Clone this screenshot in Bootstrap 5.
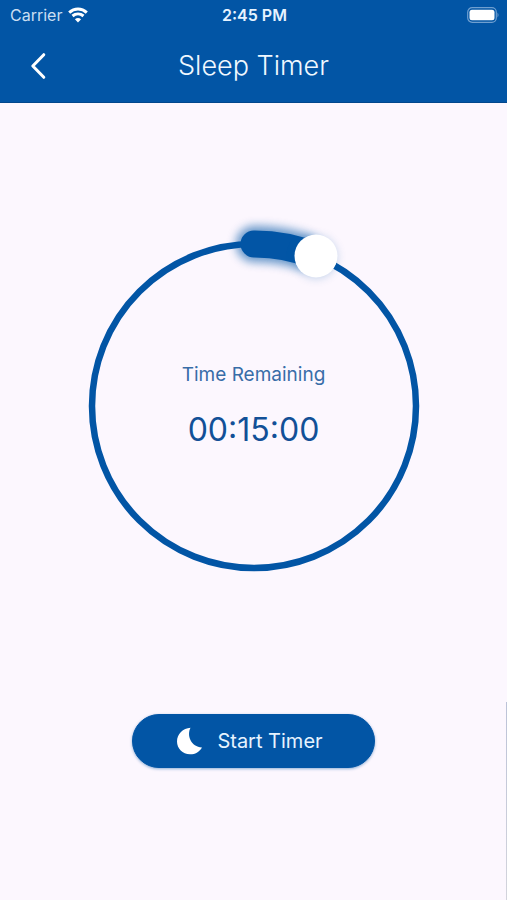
<!DOCTYPE html>
<html lang="en">
<head>
<meta charset="utf-8">
<meta name="viewport" content="width=device-width, initial-scale=1">
<title>Sleep Timer</title>
<link href="https://cdn.jsdelivr.net/npm/bootstrap@5.3.0/dist/css/bootstrap.min.css" rel="stylesheet">
<style>
  :root { --brand: #0255a5; --paper: #fcf7fe; }
  body { font-family: Inter, "Liberation Sans", sans-serif; background: var(--paper); color: var(--brand); }
  .app-header { background: var(--brand); color: #f0f8ff; border-bottom: 1px solid #02478c; }
  .status-bar { height: 30px; padding: 0 8px 0 10px; font-size: 16px; line-height: 30px; }
  .carrier { color: #c9def2; gap: 6px; }
  .clock { color: #e6f3ff; }
  .title-bar { height: 72px; padding: 0 24px; }
  .title-bar h1 { font-size: 27px; line-height: 36px; font-weight: 300; }
  .back-btn { width: 32px; height: 36px; color: inherit; }
  .screen { padding: 113px 16px 16px; gap: 118px;
    background: linear-gradient(#bcc3d8, #d3d4dc) no-repeat right bottom / 1px 198px; }
  .dial { grid-template-columns: 380px; }
  .dial > * { grid-area: 1 / 1; }
  .dial-text { gap: 24px; }
  .dial-label { font-size: 19px; line-height: 24px; color: #386da8; }
  .dial-time { font-size: 32px; line-height: 38px; color: #125097; }
  .start-btn { --bs-btn-color: #e6f3ff; --bs-btn-bg: var(--brand); --bs-btn-border-color: var(--brand);
    --bs-btn-hover-color: #fff; --bs-btn-hover-bg: #024b92; --bs-btn-active-bg: #024b92;
    width: 243px; height: 54px; padding: 0 20px 0 12px; font-size: 20px; gap: 14px; box-shadow: 0 1px 3px #0255a570; }
</style>
</head>
<body>
<div class="d-flex flex-column min-vh-100">
  <header class="app-header">
    <div class="status-bar row g-0 align-items-center">
      <div class="col d-flex align-items-center carrier">
        <span>Carrier</span>
        <svg width="20" height="16" viewBox="0 0 20 16" fill="none" stroke="#fff" stroke-width="3" role="img" aria-label="Wi-Fi">
          <path d="M1.2 5.6C6.3.9 13.7.9 18.8 5.6M4.5 9C7.7 6.2 12.3 6.2 15.5 9"/>
          <path d="M10 15.4 6.900 12.200Q10 9.700 13.100 12.200Z" fill="#fff" stroke="none"/>
        </svg>
      </div>
      <div class="col-auto fw-semibold clock">2:45 PM</div>
      <div class="col d-flex justify-content-end">
        <svg width="32" height="16" viewBox="0 0 32 16" role="img" aria-label="Battery full">
          <rect x=".7" y=".7" width="28.600" height="14.600" rx="4.500" fill="none" stroke="#6f9fd0" stroke-width="1.200"/>
          <rect x="2.500" y="2.800" width="25" height="10.400" rx="2.500" fill="#fff"/>
          <path d="M30.500 5.500Q32.500 8 30.500 10.500Z" fill="#6f9fd0"/>
        </svg>
      </div>
    </div>
    <nav class="title-bar row g-0 align-items-center">
      <div class="col">
        <button type="button" class="back-btn btn p-0 border-0 d-flex align-items-center justify-content-center" aria-label="Back">
          <svg width="20" height="30" viewBox="0 0 20 30" fill="none" stroke="#fff" stroke-width="3" stroke-linecap="round" stroke-linejoin="round"><path d="M13.800 3.700 2.800 15 13.800 26.300"/></svg>
        </button>
      </div>
      <h1 class="col-auto mb-0">Sleep Timer</h1>
      <div class="col"></div>
    </nav>
  </header>

  <main class="screen flex-grow-1 d-flex flex-column align-items-center">
    <div class="dial d-grid">
      <svg class="w-100" viewBox="0 0 380 380" aria-hidden="true">
        <defs>
          <filter id="glow" filterUnits="userSpaceOnUse" x="130" y="-30" width="190" height="140"><feGaussianBlur stdDeviation="5"/></filter>
        </defs>
        <circle cx="190" cy="190" r="162" fill="none" stroke="#0255a5" stroke-width="6.500"/>
        <path d="M190 28A162 162 0 0 1 238 35" fill="none" stroke="#0255a5" stroke-width="36" stroke-linecap="round" opacity=".6" filter="url(#glow)"/>
        <path d="M190 28A162 162 0 0 1 252 40" fill="none" stroke="#0255a5" stroke-width="27" stroke-linecap="round"/>
        <circle cx="252" cy="41" r="21" fill="#0255a5" opacity=".25" filter="url(#glow)"/>
        <circle cx="252" cy="40" r="21.500" fill="#fff"/>
      </svg>
      <div class="dial-text d-flex flex-column align-items-center justify-content-center">
        <label class="dial-label" for="minutes">Time Remaining</label>
        <output class="dial-time" for="minutes">00:15:00</output>
        <input id="minutes" class="visually-hidden" type="range" min="0" max="240" value="15">
      </div>
    </div>
    <button type="button" class="start-btn btn rounded-pill d-flex align-items-center justify-content-center">
      <svg width="27" height="28" viewBox="0 0 27 28" fill="#fff" aria-hidden="true"><path d="M14.500.8C10.500 8.500 15 20 26 20.500C23 25.500 18.500 27.500 14 27.300C6.500 27 1 21.500 1 14.500C1 7 7 1.200 14.500.8Z"/></svg>
      <span>Start Timer</span>
    </button>
  </main>
</div>
<script src="https://cdn.jsdelivr.net/npm/bootstrap@5.3.0/dist/js/bootstrap.bundle.min.js"></script>
</body>
</html>
